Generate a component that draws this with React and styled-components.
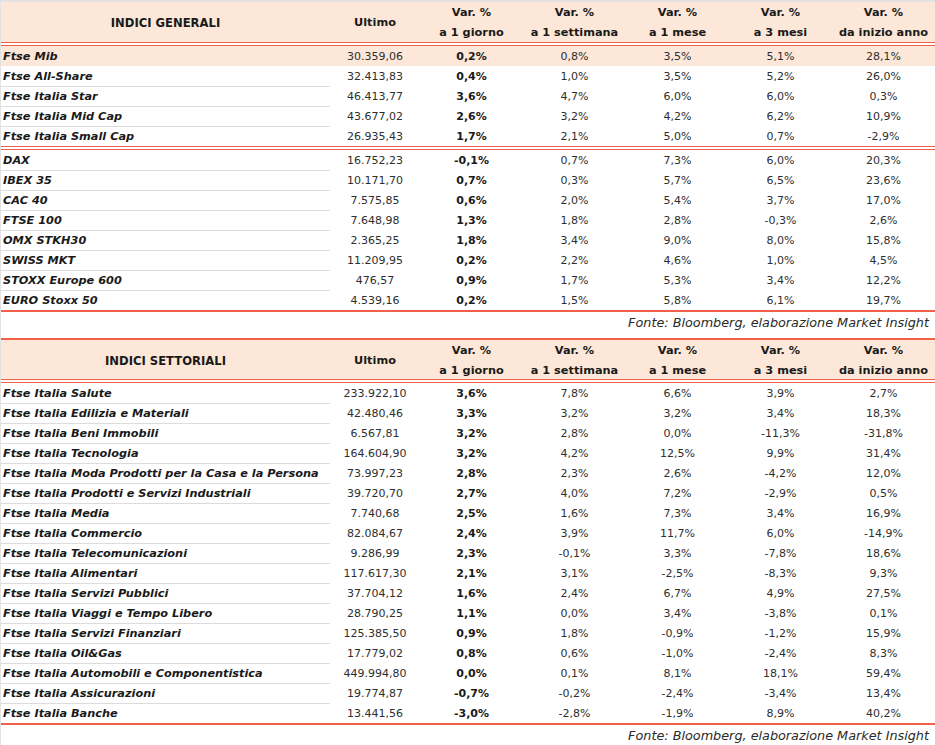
import React from 'react'
import styled, { createGlobalStyle, css } from 'styled-components'

const RED = '#f0604a'
const PEACH = '#fce7d8'
const FONT = '"DejaVu Sans", Lato, sans-serif'

const generali = [
  ['Ftse Mib', '30.359,06', '0,2%', '0,8%', '3,5%', '5,1%', '28,1%'],
  ['Ftse All-Share', '32.413,83', '0,4%', '1,0%', '3,5%', '5,2%', '26,0%'],
  ['Ftse Italia Star', '46.413,77', '3,6%', '4,7%', '6,0%', '6,0%', '0,3%'],
  ['Ftse Italia Mid Cap', '43.677,02', '2,6%', '3,2%', '4,2%', '6,2%', '10,9%'],
  ['Ftse Italia Small Cap', '26.935,43', '1,7%', '2,1%', '5,0%', '0,7%', '-2,9%']
]

const esteri = [
  ['DAX', '16.752,23', '-0,1%', '0,7%', '7,3%', '6,0%', '20,3%'],
  ['IBEX 35', '10.171,70', '0,7%', '0,3%', '5,7%', '6,5%', '23,6%'],
  ['CAC 40', '7.575,85', '0,6%', '2,0%', '5,4%', '3,7%', '17,0%'],
  ['FTSE 100', '7.648,98', '1,3%', '1,8%', '2,8%', '-0,3%', '2,6%'],
  ['OMX STKH30', '2.365,25', '1,8%', '3,4%', '9,0%', '8,0%', '15,8%'],
  ['SWISS MKT', '11.209,95', '0,2%', '2,2%', '4,6%', '1,0%', '4,5%'],
  ['STOXX Europe 600', '476,57', '0,9%', '1,7%', '5,3%', '3,4%', '12,2%'],
  ['EURO Stoxx 50', '4.539,16', '0,2%', '1,5%', '5,8%', '6,1%', '19,7%']
]

const settoriali = [
  ['Ftse Italia Salute', '233.922,10', '3,6%', '7,8%', '6,6%', '3,9%', '2,7%'],
  ['Ftse Italia Edilizia e Materiali', '42.480,46', '3,3%', '3,2%', '3,2%', '3,4%', '18,3%'],
  ['Ftse Italia Beni Immobili', '6.567,81', '3,2%', '2,8%', '0,0%', '-11,3%', '-31,8%'],
  ['Ftse Italia Tecnologia', '164.604,90', '3,2%', '4,2%', '12,5%', '9,9%', '31,4%'],
  ['Ftse Italia Moda Prodotti per la Casa e la Persona', '73.997,23', '2,8%', '2,3%', '2,6%', '-4,2%', '12,0%'],
  ['Ftse Italia Prodotti e Servizi Industriali', '39.720,70', '2,7%', '4,0%', '7,2%', '-2,9%', '0,5%'],
  ['Ftse Italia Media', '7.740,68', '2,5%', '1,6%', '7,3%', '3,4%', '16,9%'],
  ['Ftse Italia Commercio', '82.084,67', '2,4%', '3,9%', '11,7%', '6,0%', '-14,9%'],
  ['Ftse Italia Telecomunicazioni', '9.286,99', '2,3%', '-0,1%', '3,3%', '-7,8%', '18,6%'],
  ['Ftse Italia Alimentari', '117.617,30', '2,1%', '3,1%', '-2,5%', '-8,3%', '9,3%'],
  ['Ftse Italia Servizi Pubblici', '37.704,12', '1,6%', '2,4%', '6,7%', '4,9%', '27,5%'],
  ['Ftse Italia Viaggi e Tempo Libero', '28.790,25', '1,1%', '0,0%', '3,4%', '-3,8%', '0,1%'],
  ['Ftse Italia Servizi Finanziari', '125.385,50', '0,9%', '1,8%', '-0,9%', '-1,2%', '15,9%'],
  ['Ftse Italia Oil&Gas', '17.779,02', '0,8%', '0,6%', '-1,0%', '-2,4%', '8,3%'],
  ['Ftse Italia Automobili e Componentistica', '449.994,80', '0,0%', '0,1%', '8,1%', '18,1%', '59,4%'],
  ['Ftse Italia Assicurazioni', '19.774,87', '-0,7%', '-0,2%', '-2,4%', '-3,4%', '13,4%'],
  ['Ftse Italia Banche', '13.441,56', '-3,0%', '-2,8%', '-1,9%', '8,9%', '40,2%']
]

const periods = ['a 1 giorno', 'a 1 settimana', 'a 1 mese', 'a 3 mesi', 'da inizio anno']

const GlobalStyle = createGlobalStyle`
  html, body {
    margin: 0;
    padding: 0;
    background: #fff;
  }
  body {
    font-family: ${FONT};
    color: #1c1c1c;
  }
`

const columns = css`
  display: grid;
  grid-template-columns: 329px 90px repeat(4, 103px) 1fr;
`

const Page = styled.div`
  width: 935px;
  height: 745px;
  box-sizing: border-box;
  border-top: 2px solid #e2e2e2;
  border-left: 1px solid #e2e2e2;
  overflow: hidden;
`

const HeadRow = styled.div`
  ${columns}
  height: ${p => p.$h}px;
  background: ${PEACH};
  border-top: ${p => (p.$ruled ? `2px solid ${RED}` : 'none')};
  font-weight: 700;
  font-size: 11.3px;
  color: #1a1a1a;
`

const HeadCell = styled.div`
  display: flex;
  flex-direction: column;
  align-items: center;
  justify-content: center;
  padding-top: 1px;
  line-height: 20px;
  white-space: nowrap;
`

const Title = styled(HeadCell)`
  font-size: 11.6px;
`

const DoubleRule = styled.div`
  height: 2px;
  border-top: 1px solid ${RED};
  border-bottom: 1px solid ${RED};
`

const SingleRule = styled.div`
  height: 2px;
  background: ${RED};
`

const Row = styled.div`
  ${columns}
  height: 20px;
  background: ${p => (p.$hl ? PEACH : 'transparent')};
`

const Name = styled.div`
  box-sizing: border-box;
  padding-left: 2px;
  border-top: 1px solid ${p => (p.$sep ? '#dcdcdc' : 'transparent')};
  font-weight: 700;
  font-style: italic;
  font-size: 11.3px;
  line-height: 19px;
  color: #1a1a1a;
  white-space: nowrap;
`

const Num = styled.div`
  box-sizing: border-box;
  padding-top: 1px;
  text-align: center;
  font-size: 11px;
  line-height: 19px;
  font-weight: ${p => (p.$bold ? 700 : 400)};
  color: ${p => (p.$bold ? '#1a1a1a' : '#2e2e2e')};
  white-space: nowrap;
`

const Source = styled.div`
  padding: 2px 6px 0 0;
  text-align: right;
  font-style: italic;
  font-size: 12.8px;
  line-height: 17px;
  color: #2a2a2a;
  height: ${p => p.$h}px;
  box-sizing: border-box;
`

function Header ({ title, h, ruled }) {
  return (
    <HeadRow $h={h} $ruled={ruled}>
      <Title>{title}</Title>
      <HeadCell>Ultimo</HeadCell>
      {periods.map(p => (
        <HeadCell key={p}>
          <span>Var. %</span>
          <span>{p}</span>
        </HeadCell>
      ))}
    </HeadRow>
  )
}

function DataRows ({ rows, highlightFirst }) {
  return rows.map((r, i) => {
    const hl = highlightFirst && i === 0
    const sep = i > 0 && !(highlightFirst && i === 1)
    return (
      <Row key={r[0]} $hl={hl}>
        <Name $sep={sep}>{r[0]}</Name>
        <Num>{r[1]}</Num>
        <Num $bold>{r[2]}</Num>
        <Num>{r[3]}</Num>
        <Num>{r[4]}</Num>
        <Num>{r[5]}</Num>
        <Num>{r[6]}</Num>
      </Row>
    )
  })
}

export default function App () {
  return (
    <Page>
      <GlobalStyle />
      <Header title='INDICI GENERALI' h={40} />
      <DoubleRule />
      <DataRows rows={generali} highlightFirst />
      <DoubleRule />
      <DataRows rows={esteri} />
      <SingleRule />
      <Source $h={26}>Fonte: Bloomberg, elaborazione Market Insight</Source>
      <Header title='INDICI SETTORIALI' h={39} ruled />
      <DoubleRule />
      <DataRows rows={settoriali} />
      <SingleRule />
      <Source $h={20}>Fonte: Bloomberg, elaborazione Market Insight</Source>
    </Page>
  )
}
